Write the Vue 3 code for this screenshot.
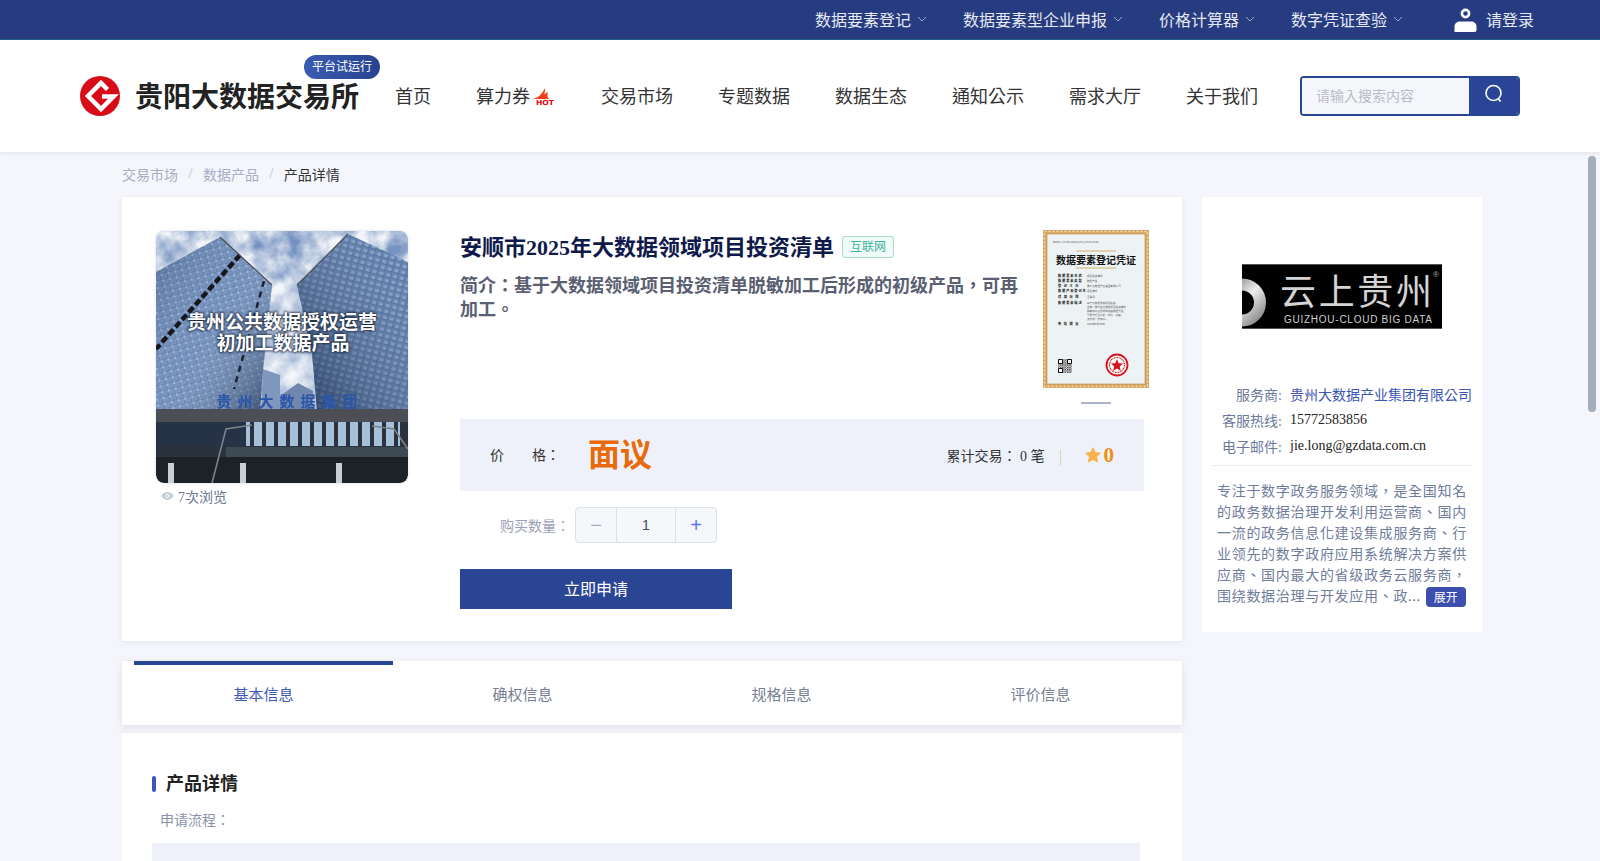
<template>
  <div class="page">
    <!-- top bar -->
    <div class="topbar">
      <a v-for="m in topMenus" :key="m" class="top-item">
        {{ m }}
        <svg class="chevron" viewBox="0 0 12 12"><path d="M2 4l4 4 4-4" /></svg>
      </a>
      <a class="login">
        <svg class="user-icon" viewBox="0 0 23 24">
          <circle cx="11.500" cy="5.500" r="3.600" fill="none" stroke="#fff" stroke-width="2.600" />
          <path d="M0.500 24v-5.500C0.500 15.500 3 13.500 6 13.500h11c3 0 5.500 2 5.500 5V22c0 1.200-.8 2-2 2z" fill="#fff" />
        </svg>
        <span>请登录</span>
      </a>
    </div>

    <!-- header -->
    <header class="header">
      <div class="brand">
        <svg class="brand-logo" viewBox="0 0 40 40">
          <circle cx="20" cy="20" r="20" fill="#d80c18" />
          <path d="M27.500 13.500L21 7 8 20l13 13 12.500-12.500H22" fill="none" stroke="#fff" stroke-width="4.500" />
        </svg>
        <span class="brand-name">贵阳大数据交易所</span>
        <span class="trial-badge">平台试运行</span>
      </div>
      <nav class="nav">
        <a v-for="n in navItems" :key="n.label" class="nav-item">
          {{ n.label }}
          <svg v-if="n.hot" class="hot" viewBox="0 0 24 18">
            <path d="M0 11c4-1 7-2 9-5 2-2 3-4 4-6 0 3 0 5-1 6l4-2c-1 3-1 5 1 7H5z" fill="#f2401f" />
            <text x="4" y="17" textLength="18" lengthAdjust="spacingAndGlyphs" class="hot-text">HOT</text>
          </svg>
        </a>
      </nav>
      <div class="search">
        <input class="search-input" placeholder="请输入搜索内容" />
        <button class="search-btn">
          <svg viewBox="0 0 20 20" width="20" height="20">
            <circle cx="9.500" cy="9" r="7.500" fill="none" stroke="#fff" stroke-width="1.600" />
            <path d="M14 14.500l2.500 3" stroke="#fff" stroke-width="1.800" fill="none" />
          </svg>
        </button>
      </div>
    </header>

    <!-- scrolling content -->
    <main class="main">
      <div class="crumbs">
        <span>交易市场</span><i>/</i><span>数据产品</span><i>/</i><span class="current">产品详情</span>
      </div>

      <div class="columns">
        <div class="left">
          <section class="card product">
            <div class="gallery">
              <svg class="photo" viewBox="0 0 252 252">
                <defs>
                  <linearGradient id="skyGrad" x1="0" y1="0" x2="0" y2="1">
                    <stop offset="0" stop-color="#6f8dbd" />
                    <stop offset="1" stop-color="#c9d6ea" />
                  </linearGradient>
                  <linearGradient id="shadeL" x1="0" y1="0" x2="1" y2="1">
                    <stop offset="0" stop-color="#24395f" stop-opacity=".35" />
                    <stop offset=".5" stop-color="#c8d6ec" stop-opacity=".12" />
                    <stop offset="1" stop-color="#16243f" stop-opacity=".65" />
                  </linearGradient>
                  <linearGradient id="shadeR" x1="1" y1="0" x2="0" y2="1">
                    <stop offset="0" stop-color="#b9c9e2" stop-opacity=".12" />
                    <stop offset="1" stop-color="#122345" stop-opacity=".7" />
                  </linearGradient>
                  <filter id="cloudFx" x="0" y="0" width="100%" height="100%">
                    <feTurbulence type="fractalNoise" baseFrequency="0.04" numOctaves="4" seed="7" />
                    <feColorMatrix values="0 0 0 0 1  0 0 0 0 1  0 0 0 0 1  2.200 0 0 0 -0.550" />
                  </filter>
                  <pattern id="glassL" width="7" height="6" patternUnits="userSpaceOnUse" patternTransform="rotate(-14)">
                    <rect width="7" height="6" fill="#6f8ebd" />
                    <rect width="3" height="3" fill="#9ab3d8" />
                    <path d="M0 0h7M0 0v6" stroke="#2f4161" stroke-width=".6" />
                  </pattern>
                  <pattern id="glassR" width="7" height="6" patternUnits="userSpaceOnUse" patternTransform="rotate(14)">
                    <rect width="7" height="6" fill="#587aac" />
                    <rect x="3" y="3" width="4" height="3" fill="#80a0ca" />
                    <path d="M0 0h7M0 0v6" stroke="#2b3e5f" stroke-width=".6" />
                  </pattern>
                  <pattern id="shopWin" width="12" height="24" patternUnits="userSpaceOnUse">
                    <rect width="12" height="24" fill="#29323f" />
                    <rect x="2" y="0" width="8" height="24" fill="#a5c0d8" />
                  </pattern>
                  <filter id="soft"><feGaussianBlur stdDeviation=".5" /></filter>
                  <filter id="textGlow" x="-10%" y="-30%" width="120%" height="160%">
                    <feGaussianBlur stdDeviation="1.200" />
                  </filter>
                  <clipPath id="photoClip"><rect width="252" height="252" rx="8" /></clipPath>
                </defs>
                <g clip-path="url(#photoClip)">
                  <rect width="252" height="252" fill="url(#skyGrad)" />
                  <rect width="252" height="190" filter="url(#cloudFx)" opacity=".9" />
                  <g filter="url(#soft)">
                    <polygon points="107,138 124,144 124,180 105,180" fill="#7f97bd" />
                    <polygon points="124,165 142,152 157,160 157,180 124,180" fill="#7187ad" />
                    <polygon points="64,6 116,54 107,139 104,180 0,180 0,41" fill="url(#glassL)" />
                    <polygon points="64,6 116,54 107,139 104,180 0,180 0,41" fill="url(#shadeL)" />
                    <polygon points="192,3 141,54 156,122 161,180 252,180 252,31" fill="url(#glassR)" />
                    <polygon points="192,3 141,54 156,122 161,180 252,180 252,31" fill="url(#shadeR)" />
                    <path d="M84 24L0 118" stroke="#14181f" stroke-width="4.500" stroke-dasharray="7 3" />
                    <path d="M108 50L78 158" stroke="#1c2230" stroke-width="2.500" stroke-dasharray="6 5" />
                    <path d="M64 6L116 54M192 3L141 54" stroke="#4b4f57" stroke-width="1.200" />
                    <rect y="180" width="252" height="72" fill="#2c323c" />
                    <rect y="178" width="252" height="13" fill="#4b4f55" />
                    <rect x="90" y="191" width="154" height="24" fill="url(#shopWin)" />
                    <rect x="0" y="191" width="90" height="24" fill="#253044" />
                    <rect x="70" y="216" width="182" height="10" fill="#3e4a52" />
                    <rect y="226" width="252" height="26" fill="#1e2228" />
                    <rect x="12" y="232" width="6" height="20" fill="#c8d0d2" />
                    <rect x="84" y="232" width="6" height="20" fill="#c8d0d2" />
                    <rect x="180" y="232" width="6" height="20" fill="#c8d0d2" />
                    <path d="M56 252L70 198l26-4M252 218l-14-20-22-3" stroke="#7c8389" stroke-width="1.600" fill="none" />
                    <text x="134" y="176" text-anchor="middle" class="photo-sign">贵州大数据集团</text>
                  </g>
                  <g class="photo-shadow" filter="url(#textGlow)">
                    <text x="126" y="98" text-anchor="middle">贵州公共数据授权运营</text>
                    <text x="127" y="119" text-anchor="middle">初加工数据产品</text>
                  </g>
                  <g class="photo-title">
                    <text x="126" y="98" text-anchor="middle">贵州公共数据授权运营</text>
                    <text x="127" y="119" text-anchor="middle">初加工数据产品</text>
                  </g>
                </g>
              </svg>
              <div class="views">
                <svg viewBox="0 0 14 10" width="13" height="10">
                  <path d="M0.500 5C2.200 2 4.500.8 7 .8S11.800 2 13.500 5C11.800 8 9.500 9.200 7 9.200S2.200 8 .5 5z" fill="#c4cbd8" />
                  <circle cx="7" cy="5" r="2.300" fill="#fff" />
                  <circle cx="7" cy="5" r="1.300" fill="#c4cbd8" />
                </svg>
                <span>7次浏览</span>
              </div>
            </div>

            <div class="info">
              <div class="info-top">
                <div class="info-text">
                  <div class="title-row">
                    <h1 class="title">安顺市2025年大数据领域项目投资清单</h1>
                    <span class="tag">互联网</span>
                  </div>
                  <p class="intro">简介：基于大数据领域项目投资清单脱敏加工后形成的初级产品，可再加工。</p>
                </div>
                <div class="cert-wrap">
                  <svg class="cert" viewBox="0 0 106 158">
                    <rect width="106" height="158" fill="#d8a560" />
                    <rect x="1.500" y="1.500" width="103" height="155" fill="none" stroke="#f2dcae" stroke-width="1.500" stroke-dasharray="2 2" />
                    <rect x="4" y="4" width="98" height="150" fill="#edf2f4" />
                    <rect x="4" y="4" width="98" height="150" fill="none" stroke="#b98a45" stroke-width=".6" />
                    <text x="10" y="13" class="c-tiny">BSON: 1/2730,2810/0,871,8/510/29/81</text>
                    <path d="M33 21h40M33 38h40" stroke="#c8a24f" stroke-width=".8" />
                    <text x="53" y="34" text-anchor="middle" class="c-title">数据要素登记凭证</text>
                    <g v-for="r in certRows" :key="r.y">
                      <text x="15" :y="r.y" class="c-label">{{ r.label }}</text>
                      <text x="44" :y="r.y" class="c-tiny">{{ r.value }}</text>
                    </g>
                    <text x="44" y="78" class="c-tiny">主体：贵州省大数据项目投资清单</text>
                    <text x="44" y="82" class="c-tiny">脱敏加工后形成的初级数据产品，</text>
                    <text x="44" y="86" class="c-tiny">可用于行业分析、统计、决策，</text>
                    <text x="44" y="90" class="c-tiny">支持进一步加工。</text>
                    <defs>
                      <pattern id="qrFill" width="2.400" height="2.400" patternUnits="userSpaceOnUse">
                        <rect width="1.300" height="1.300" fill="#111" />
                        <rect x="1.300" y="1.300" width="1" height="1" fill="#333" />
                      </pattern>
                    </defs>
                    <rect x="15" y="129" width="14" height="14" fill="#fff" />
                    <rect x="15" y="129" width="14" height="14" fill="url(#qrFill)" />
                    <path d="M15.500 129.500h4v4h-4zM24.500 129.500h4v4h-4zM15.500 138.500h4v4h-4z" fill="#fff" stroke="#111" />
                    <circle cx="74" cy="135" r="10.500" fill="#fff" stroke="#d7141d" stroke-width="1.800" />
                    <circle cx="74" cy="135" r="7.500" fill="none" stroke="#d7141d" stroke-width="1.200" stroke-dasharray="1 .6" />
                    <path d="M74 129l1.700 4.300 4.500.2-3.500 2.900 1.200 4.500-3.900-2.500-3.900 2.500 1.200-4.500-3.500-2.900 4.500-.2z" fill="#d7141d" />
                  </svg>
                  <div class="cert-dot"></div>
                </div>
              </div>

              <div class="price-panel">
                <span class="price-label">价</span>
                <span class="price-label second">格：</span>
                <span class="price">面议</span>
                <span class="deals">累计交易： 0 笔</span>
                <span class="deals-sep"></span>
                <svg class="star" viewBox="0 0 16 16" width="16" height="16">
                  <path d="M8 .8l2.200 4.700 5 .7-3.600 3.600.9 5.100L8 12.500l-4.500 2.400.9-5.100L.8 6.200l5-.7z" fill="#f7b24c" stroke="#f7b24c" stroke-linejoin="round" />
                </svg>
                <span class="score">0</span>
              </div>

              <div class="qty-row">
                <span class="qty-label">购买数量：</span>
                <div class="stepper">
                  <button class="step minus">−</button>
                  <span class="qty-val">1</span>
                  <button class="step plus">+</button>
                </div>
              </div>

              <button class="apply">立即申请</button>
            </div>
          </section>

          <div class="tabs">
            <div v-for="(t, i) in tabs" :key="t" class="tab" :class="{ active: i === 0 }">{{ t }}</div>
          </div>

          <section class="card detail">
            <h2 class="detail-title">产品详情</h2>
            <p class="flow-label">申请流程：</p>
            <div class="flow-box"></div>
          </section>
        </div>

        <aside class="card side">
          <svg class="vendor-logo" viewBox="0 0 200 65">
            <defs>
              <linearGradient id="ringGrad" x1="0" y1="0" x2="1" y2="1">
                <stop offset="0" stop-color="#777" />
                <stop offset=".5" stop-color="#eee" />
                <stop offset="1" stop-color="#888" />
              </linearGradient>
            </defs>
            <rect width="200" height="65" fill="#000" />
            <rect width="200" height="1" fill="#555" />
            <rect y="64" width="200" height="1" fill="#555" />
            <circle cx="0" cy="38.500" r="18" fill="none" stroke="url(#ringGrad)" stroke-width="12" />
            <text x="38" y="41" textLength="152" class="v-cn">云上贵州</text>
            <text x="42" y="59" textLength="148" class="v-en">GUIZHOU-CLOUD  BIG  DATA</text>
            <text x="191" y="13" class="v-r">®</text>
          </svg>
          <div class="meta">
            <div class="meta-row"><label>服务商:</label><span class="vendor-name">贵州大数据产业集团有限公司</span></div>
            <div class="meta-row"><label>客服热线:</label><span>15772583856</span></div>
            <div class="meta-row"><label>电子邮件:</label><span>jie.long@gzdata.com.cn</span></div>
          </div>
          <div class="about">
            专注于数字政务服务领域，是全国知名的政务数据治理开发利用运营商、国内一流的政务信息化建设集成服务商、行业领先的数字政府应用系统解决方案供应商、国内最大的省级政务云服务商，围绕数据治理与开发应用、政<span class="dots">...</span>
            <button class="expand">展开</button>
          </div>
        </aside>
      </div>
    </main>

    <div class="scroll-thumb"></div>
  </div>
</template>

<script setup>
const topMenus = ['数据要素登记', '数据要素型企业申报', '价格计算器', '数字凭证查验']
const navItems = [
  { label: '首页' },
  { label: '算力券', hot: true },
  { label: '交易市场' },
  { label: '专题数据' },
  { label: '数据生态' },
  { label: '通知公示' },
  { label: '需求大厅' },
  { label: '关于我们' }
]
const tabs = ['基本信息', '确权信息', '规格信息', '评价信息']
const certRows = [
  { y: 47, label: '数据要素名称', value: '项目投资清单' },
  { y: 52, label: '数据要素类型', value: '数据产品' },
  { y: 57, label: '登 记 主 体', value: '贵州大数据产业集团有限公司' },
  { y: 62, label: '数据产品登记名', value: '项目清单' },
  { y: 68, label: '适 用 范 围', value: '互联网' },
  { y: 74, label: '数据要素描述', value: '基于大数据领域项目投资' },
  { y: 95, label: '有 效 期 至', value: '2026年8月26日' }
]
</script>

<style>
html,
body {
  margin: 0;
  height: 100%;
  overflow: hidden;
}
</style>

<style scoped>
.page {
  position: relative;
  height: 100vh;
  display: flex;
  flex-direction: column;
  background: #f5f6fb;
  font-family: "Liberation Serif", "Noto Sans CJK TC", serif;
  color: #333;
}
.scroll-thumb {
  position: absolute;
  right: 4px;
  top: 156px;
  width: 8px;
  height: 256px;
  border-radius: 4px;
  background: #a4adbb;
}

/* ===== TOP BAR ===== */
.topbar {
  flex: none;
  height: 39px;
  border-bottom: 1px solid #24608a;
  background: #273c80;
  display: flex;
  justify-content: flex-end;
  align-items: center;
  padding-right: 66px;
  color: #e6e9f3;
  font-size: 16px;
}
.top-item {
  display: flex;
  align-items: center;
  margin: 0 35px 2px 0;
}
.chevron {
  width: 12px;
  height: 12px;
  margin-left: 5px;
  fill: none;
  stroke: #9aa7c8;
  stroke-width: 1;
}
.login {
  display: flex;
  align-items: center;
  margin-left: 15px;
}
.login span {
  margin-bottom: 2px;
}
.user-icon {
  width: 23px;
  height: 24px;
  margin-right: 9px;
}

/* ===== HEADER ===== */
.header {
  flex: none;
  position: relative;
  z-index: 2;
  height: 112px;
  padding-left: 80px;
  background: #fff;
  box-shadow: 0 1px 4px rgba(40, 50, 90, 0.1);
  display: flex;
  align-items: center;
}
.brand {
  position: relative;
  display: flex;
  align-items: center;
}
.brand-logo {
  width: 40px;
  height: 40px;
  margin-right: 15px;
}
.brand-name {
  width: 225px;
  margin-bottom: 2px;
  font-size: 28px;
  font-weight: 700;
  color: #222;
  white-space: nowrap;
}
.trial-badge {
  position: absolute;
  left: 224px;
  top: -20px;
  width: 76px;
  height: 24px;
  line-height: 24px;
  text-align: center;
  font-size: 12px;
  color: #fff;
  border-radius: 12px;
  background: linear-gradient(90deg, #3a5cb2, #28428f);
}
.nav {
  display: flex;
  align-items: center;
  gap: 45px;
  margin: 0 0 2px 35px;
}
.nav-item {
  display: flex;
  align-items: center;
  font-size: 18px;
  color: #333;
  white-space: nowrap;
}
.hot {
  width: 24px;
  height: 18px;
  margin: 3px 0 0 2px;
}
.hot-text {
  font: 700 7px "DejaVu Sans", sans-serif;
  fill: #e8000c;
}
.search {
  display: flex;
  width: 220px;
  height: 40px;
  margin-left: 42px;
  box-sizing: border-box;
  border: 2px solid #2a4595;
  border-radius: 4px;
  overflow: hidden;
}
.search-input {
  flex: 1;
  min-width: 0;
  border: 0;
  outline: 0;
  padding: 1px 0 0 14px;
  background: #f5f6f9;
  font: 14px "Liberation Serif", "Noto Sans CJK TC", serif;
}
.search-input::placeholder {
  color: #b9bdca;
}
.search-btn {
  width: 49px;
  flex: none;
  border: 0;
  padding: 0 0 1px;
  background: #2a4595;
}

/* ===== MAIN ===== */
.main {
  flex: 1;
  min-height: 0;
  overflow: hidden;
  padding-left: 122px;
}
.crumbs {
  height: 43px;
  padding-bottom: 2px;
  display: flex;
  align-items: center;
  font-size: 14px;
  color: #a7afc6;
}
.crumbs i {
  font-style: normal;
  margin: 0 10.5px;
  color: #b4bbce;
}
.crumbs .current {
  color: #333;
}
.columns {
  display: flex;
  align-items: flex-start;
  gap: 20px;
}
.left {
  width: 1060px;
  flex: none;
}
.card {
  background: #fff;
}

/* ===== PRODUCT ===== */
.product {
  display: flex;
  box-sizing: border-box;
  height: 444px;
  padding: 34px 38px 32px 34px;
  box-shadow: 0 2px 6px rgba(40, 50, 90, 0.07);
}
.gallery {
  width: 252px;
  flex: none;
  margin-right: 52px;
}
.photo {
  display: block;
  width: 252px;
  height: 252px;
  border-radius: 8px;
  box-shadow: 0 0 3px rgba(120, 140, 190, 0.3);
}
.photo-title text {
  font: 700 19px "Noto Sans CJK SC", sans-serif;
  fill: #fff;
}
.photo-shadow text {
  font: 700 19px "Noto Sans CJK SC", sans-serif;
  fill: #1d2a44;
  stroke: #1d2a44;
  stroke-width: 1.5px;
}
.photo-sign {
  font: 700 15px "Noto Sans CJK SC", sans-serif;
  fill: #2a55a8;
  letter-spacing: 6px;
}
.views {
  display: flex;
  align-items: center;
  gap: 4px;
  padding: 3px 0 0 5px;
  height: 20px;
  font-size: 14px;
  color: #6b7690;
}
.info {
  flex: 1;
  min-width: 0;
}
.info-top {
  display: flex;
  justify-content: space-between;
  height: 188px;
}
.info-text {
  width: 560px;
}
.title-row {
  display: flex;
  align-items: center;
  height: 32px;
}
.title {
  margin: 0 0 5px;
  font-size: 22px;
  font-weight: 700;
  color: #0f1a4a;
  white-space: nowrap;
}
.tag {
  margin-left: 8px;
  width: 52px;
  height: 22px;
  box-sizing: border-box;
  line-height: 20px;
  text-align: center;
  font-size: 12px;
  color: #3bb39a;
  background: #f0faf7;
  border: 1px solid #a6dccd;
  border-radius: 3px;
}
.intro {
  margin: 11px 0 0;
  font-size: 18px;
  font-weight: 700;
  line-height: 24px;
  color: #5a6072;
}
.cert-wrap {
  flex: none;
  width: 106px;
  margin: -1px -5px 0 0;
}
.cert {
  display: block;
  width: 106px;
  height: 158px;
}
.c-tiny {
  font: 2.6px "Noto Sans CJK SC", sans-serif;
  fill: #555;
}
.c-label {
  font: 700 3.2px "Noto Sans CJK SC", sans-serif;
  fill: #111;
  letter-spacing: 0.9px;
}
.c-title {
  font: 700 10px "Noto Sans CJK SC", sans-serif;
  fill: #111;
}
.cert-dot {
  width: 30px;
  height: 2px;
  margin: 14px auto 0;
  background: #a9b4cc;
}
.price-panel {
  height: 72px;
  display: flex;
  align-items: center;
  background: #eef1fa;
  font-size: 14px;
  color: #333;
}
.price-label {
  margin: 0 0 2px 30px;
}
.price-label.second {
  margin-left: 28px;
}
.price {
  margin-left: 28px;
  font-size: 32px;
  font-weight: 700;
  color: #e86a0a;
  line-height: 1;
}
.deals {
  margin-left: auto;
  white-space: pre;
}
.deals-sep {
  width: 1px;
  height: 16px;
  margin: 5px 24px 0 15px;
  background: #e6d3ae;
}
.star {
  margin-right: 3px;
}
.score {
  margin-right: 30px;
  font-size: 21px;
  font-weight: 700;
  color: #ee8f12;
}
.qty-row {
  display: flex;
  align-items: center;
  margin-top: 16px;
  padding-left: 40px;
}
.qty-label {
  width: 75px;
  font-size: 14px;
  color: #9aa1b5;
  white-space: nowrap;
}
.stepper {
  display: flex;
  width: 142px;
  height: 36px;
  box-sizing: border-box;
  border: 1px solid #dde1ec;
  border-radius: 4px;
  background: #f6f7fb;
  align-items: stretch;
  overflow: hidden;
}
.step {
  width: 40px;
  flex: none;
  border: 0;
  padding: 0;
  background: transparent;
  font: 20px "Liberation Sans", sans-serif;
}
.minus {
  color: #a3adc4;
}
.plus {
  color: #5b78e8;
}
.qty-val {
  flex: 1;
  border-left: 1px solid #dde1ec;
  border-right: 1px solid #dde1ec;
  text-align: center;
  font: 14px/34px "Liberation Sans", sans-serif;
  color: #444b60;
}
.apply {
  display: block;
  width: 272px;
  height: 40px;
  margin-top: 26px;
  border: 0;
  padding: 0 0 2px;
  background: #2a4594;
  color: #fff;
  font: 16px "Liberation Serif", "Noto Sans CJK TC", serif;
}

/* ===== TABS ===== */
.tabs {
  display: flex;
  height: 64px;
  margin-top: 20px;
  padding: 0 12px;
  background: #fff;
  box-shadow: 0 3px 8px rgba(40, 50, 70, 0.1);
  position: relative;
}
.tab {
  flex: 1;
  box-sizing: border-box;
  line-height: 60px;
  text-align: center;
  font-size: 15px;
  color: #777f92;
  border-top: 4px solid transparent;
}
.tab.active {
  border-top-color: #2a4594;
  color: #3f5ab5;
}

/* ===== DETAIL ===== */
.detail {
  margin-top: 8px;
  padding: 38px 42px 0 30px;
  height: 1200px;
}
.detail-title {
  position: relative;
  margin: 0;
  padding-left: 14px;
  font-size: 18px;
  line-height: 26px;
  font-weight: 700;
  color: #222;
}
.detail-title::before {
  content: "";
  position: absolute;
  left: 0;
  top: 5px;
  width: 4px;
  height: 16px;
  border-radius: 2px;
  background: #3a56b8;
}
.flow-label {
  margin: 14px 0 0 8px;
  font-size: 14px;
  line-height: 20px;
  color: #8a92a8;
}
.flow-box {
  height: 300px;
  margin-top: 12px;
  background: #eef1fa;
}

/* ===== SIDE ===== */
.side {
  width: 280px;
  height: 435px;
  flex: none;
  box-sizing: border-box;
  padding: 67px 10px 0;
}
.vendor-logo {
  display: block;
  width: 200px;
  height: 65px;
  margin-left: 30px;
}
.v-cn {
  font: 400 36px "Noto Sans CJK SC", sans-serif;
  fill: #d4d4d4;
}
.v-en {
  font: 10px "Liberation Sans", sans-serif;
  fill: #cfcfcf;
  white-space: pre;
}
.v-r {
  font: 8px "Liberation Sans", sans-serif;
  fill: #aaa;
}
.meta {
  margin-top: 52px;
  padding-bottom: 6px;
  border-bottom: 1px solid #e8eaf2;
}
.meta-row {
  display: flex;
  align-items: center;
  height: 26px;
  font-size: 14px;
  color: #222;
  white-space: nowrap;
}
.meta-row label {
  width: 70px;
  margin-right: 8px;
  text-align: right;
  color: #6b7a9a;
}
.vendor-name {
  color: #3a56b0;
}
.about {
  margin: 15px 0 0 5px;
  width: 252px;
  font-size: 14px;
  line-height: 21px;
  letter-spacing: 0.7px;
  color: #6f7c9c;
}
.dots {
  color: #555;
}
.expand {
  display: inline-block;
  vertical-align: middle;
  width: 40px;
  height: 20px;
  margin: 0 0 2px 5px;
  border: 0;
  padding: 0;
  border-radius: 4px;
  background: #3d4fae;
  color: #fff;
  font: 12px "Liberation Serif", "Noto Sans CJK TC", serif;
  letter-spacing: 0;
}
</style>
